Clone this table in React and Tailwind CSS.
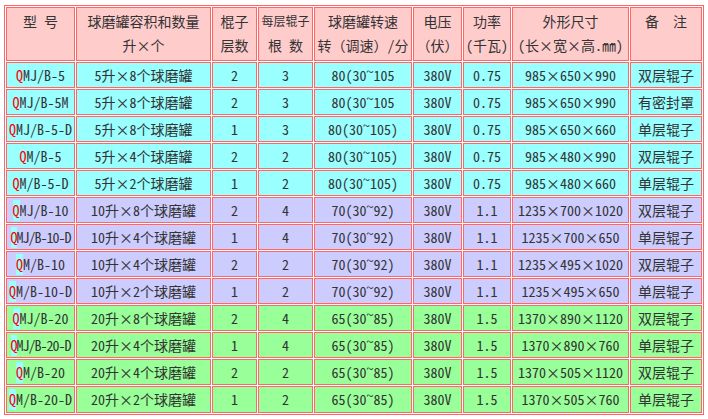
import React from "react";

const CYAN = "bg-[#99ffff]";
const LAV = "bg-[#ccccff]";
const GREEN = "bg-[#99ff99]";

const rows = [
  ["MJ/B-5", "5升×8个球磨罐", "2", "3", "80(30", "105", "380V", "0.75", "985×650×990", "双层辊子", CYAN],
  ["MJ/B-5M", "5升×8个球磨罐", "2", "3", "80(30", "105", "380V", "0.75", "985×650×990", "有密封罩", CYAN],
  ["MJ/B-5-D", "5升×8个球磨罐", "1", "3", "80(30", "105)", "380V", "0.75", "985×650×660", "单层辊子", CYAN],
  ["M/B-5", "5升×4个球磨罐", "2", "2", "80(30", "105)", "380V", "0.75", "985×480×990", "双层辊子", CYAN],
  ["M/B-5-D", "5升×2个球磨罐", "1", "2", "80(30", "105)", "380V", "0.75", "985×480×660", "单层辊子", CYAN],
  ["MJ/B-10", "10升×8个球磨罐", "2", "4", "70(30", "92)", "380V", "1.1", "1235×700×1020", "双层辊子", LAV],
  ["MJ/B-10-D", "10升×4个球磨罐", "1", "4", "70(30", "92)", "380V", "1.1", "1235×700×650", "单层辊子", LAV],
  ["M/B-10", "10升×4个球磨罐", "2", "2", "70(30", "92)", "380V", "1.1", "1235×495×1020", "双层辊子", LAV],
  ["M/B-10-D", "10升×2个球磨罐", "1", "2", "70(30", "92)", "380V", "1.1", "1235×495×650", "单层辊子", LAV],
  ["MJ/B-20", "20升×8个球磨罐", "2", "4", "65(30", "85)", "380V", "1.5", "1370×890×1120", "双层辊子", GREEN],
  ["MJ/B-20-D", "20升×4个球磨罐", "1", "4", "65(30", "85)", "380V", "1.5", "1370×890×760", "单层辊子", GREEN],
  ["M/B-20", "20升×4个球磨罐", "2", "2", "65(30", "85)", "380V", "1.5", "1370×505×1120", "双层辊子", GREEN],
  ["M/B-20-D", "20升×2个球磨罐", "1", "2", "65(30", "85)", "380V", "1.5", "1370×505×760", "单层辊子", GREEN],
];

const cell = "border border-[#ff6666] flex items-center justify-center whitespace-nowrap";
const head = "border border-[#ff6666] bg-[#ffcccc] flex flex-col items-center pt-[1px] leading-[24px] whitespace-nowrap";

export default function App() {
  return (
    <div className="w-[708px] h-[419px] bg-white pt-[5px] pl-[4px] text-[14px] text-[#333333] font-['Noto_Sans_Mono_CJK_SC','Noto_Sans_CJK_SC',sans-serif]">
      <div className="w-[700px] border border-[#ff6666] p-[1px] grid grid-cols-[69px_135px_45px_55px_98px_49px_48px_117px_72px] grid-rows-[54px_repeat(12,26px)_27px] gap-[1px]">
        <div className={head}><span>型&nbsp;号</span></div>
        <div className={head}><span>球磨罐容积和数量</span><span>升×个</span></div>
        <div className={head}><span>棍子</span><span>层数</span></div>
        <div className={head}><span className="text-[12px]">每层辊子</span><span>根&nbsp;数</span></div>
        <div className={head}><span>球磨罐转速</span><span>转（调速）/分</span></div>
        <div className={head}><span>电压</span><span>（伏）</span></div>
        <div className={head}><span>功率</span><span>(千瓦)</span></div>
        <div className={head}><span>外形尺寸</span><span>(长×宽×高.㎜)</span></div>
        <div className={head}><span>备　注</span></div>
        {rows.map((r, i) => (
          <React.Fragment key={i}>
            <div className={`${cell} ${r[10]} ${r[0].length > 8 ? "tracking-[-1px]" : ""}`}>
              <span className="text-[#ff0000] bg-[#99ffff]">Q</span>
              <span>{r[0]}</span>
            </div>
            <div className={`${cell} ${r[10]}`}>{r[1]}</div>
            <div className={`${cell} ${r[10]}`}>{r[2]}</div>
            <div className={`${cell} ${r[10]}`}>{r[3]}</div>
            <div className={`${cell} ${r[10]}`}>
              <span>{r[4]}</span>
              <span className="self-start leading-none mt-[1px]">~</span>
              <span>{r[5]}</span>
            </div>
            <div className={`${cell} ${r[10]}`}>{r[6]}</div>
            <div className={`${cell} ${r[10]}`}>{r[7]}</div>
            <div className={`${cell} ${r[10]}`}>{r[8]}</div>
            <div className={`${cell} ${r[10]}`}>{r[9]}</div>
          </React.Fragment>
        ))}
      </div>
    </div>
  );
}
